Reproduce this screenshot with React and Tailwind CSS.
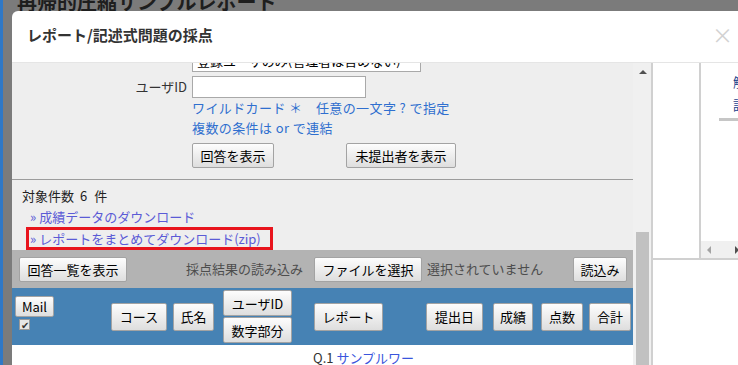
import React from "react";

const btn = "flex items-center justify-center bg-linear-to-b from-[#fdfdfd] to-[#dedede] border border-[#a3a3a3] rounded-[2px] text-[13px] text-black leading-none";

const Btn = ({ w, h = "h-[25px]", className = "", children }) => (
    <div className={`${btn} ${w} ${h} ${className}`}>{children}</div>
);

const App = () => {
    return (
        <div className="w-[738px] h-[365px] relative overflow-hidden bg-[#7b7b7b] font-['Noto_Sans_CJK_JP',sans-serif] text-[#333]">
            {/* page behind the dialog */}
            <div className="flex h-full">
                <div className="w-[3px] h-full bg-[#2f78c6]"></div>
                <div className="ml-[14px] mt-[-10px] text-[20px] font-bold leading-[24px] text-[#1e1e1e]">再帰的圧縮サンプルレポート</div>
            </div>

            {/* dialog */}
            <div className="absolute left-[12px] top-[11px] w-[740px] h-[360px] bg-white rounded-tl-[6px] flex flex-col overflow-hidden">
                <div className="h-[52px] shrink-0 border-b border-[#e5e5e5] flex items-center justify-between pl-[15px] pr-[19px]">
                    <span className="text-[15px] font-bold text-[#333] mt-[-2px]">レポート/記述式問題の採点</span>
                    <span className="text-[21px] leading-none text-[#d2d2d2] mt-[-4px]">×</span>
                </div>

                <div className="flex flex-1 overflow-hidden">
                    {/* left pane */}
                    <div className="w-[621px] shrink-0 bg-[#eeeeee] flex flex-col">
                        <div className="ml-[180px] mt-[-13px] w-[229px] h-[22px] bg-white border border-[#a9a9a9] text-[13px] leading-[20px] pl-[4px] text-black whitespace-nowrap overflow-hidden">登録ユーザのみ(管理者は含めない)</div>

                        <div className="flex items-center mt-[4px]">
                            <span className="w-[180px] pr-[5px] text-right text-[13px]">ユーザID</span>
                            <div className="w-[174px] h-[22px] bg-white border border-[#a9a9a9]"></div>
                        </div>

                        <div className="pl-[180px] text-[13px] leading-[20px] text-[#2f6fcf]">
                            <div className="tracking-[0.4px]">ワイルドカード ＊　任意の一文字 ? で指定</div>
                            <div className="tracking-[0.4px]">複数の条件は or で連結</div>
                        </div>

                        <div className="pl-[180px] mt-[5px] flex">
                            <Btn w="w-[82px]">回答を表示</Btn>
                            <Btn w="w-[110px]" className="ml-[72px]">未提出者を表示</Btn>
                        </div>

                        <div className="mt-[11px] h-px bg-[#9c9c9c]"></div>

                        <div className="mt-[6px] pl-[10px] text-[13px] leading-[20px] text-[#222] flex">
                            <span>対象件数</span>
                            <span className="ml-[6px]">6</span>
                            <span className="ml-[7px]">件</span>
                        </div>
                        <div className="pl-[18px] text-[13px] leading-[21px] text-[#5b5bd6]">» 成績データのダウンロード</div>
                        <div className="ml-[14px] w-[247px] h-[23px] border-[3px] border-[#e8141c] flex items-center pl-[1px] text-[13px] text-[#5b5bd6] whitespace-nowrap">» レポートをまとめてダウンロード(zip)</div>

                        <div className="h-[38px] shrink-0 bg-[#b3b3b3] flex items-center text-[13px]">
                            <Btn w="w-[108px]" className="ml-[7px]">回答一覧を表示</Btn>
                            <span className="ml-[59px] w-[128px] text-[#4d4d4d]">採点結果の読み込み</span>
                            <Btn w="w-[108px]">ファイルを選択</Btn>
                            <span className="ml-[5px] w-[146px] text-[#4d4d4d]">選択されていません</span>
                            <Btn w="w-[54px]">読込み</Btn>
                        </div>

                        <div className="h-[57px] shrink-0 bg-[#4682b4] flex items-center">
                            <div className="ml-[3px] self-start pt-[8px] flex flex-col">
                                <Btn w="w-[39px]" h="h-[21px]" className="border-[#8f8f8f]">Mail</Btn>
                                <div className="ml-[4px] mt-[2px] w-[11px] h-[11px] bg-[#e6e6e6] border border-[#9a9a9a] flex items-center justify-center text-[10px] leading-none text-[#333]">✔</div>
                            </div>
                            <Btn w="w-[56px]" h="h-[28px]" className="ml-[57px] border-[#8f8f8f]">コース</Btn>
                            <Btn w="w-[41px]" h="h-[28px]" className="ml-[6px] border-[#8f8f8f]">氏名</Btn>
                            <div className="ml-[9px] flex flex-col">
                                <Btn w="w-[69px]" h="h-[26px]" className="border-[#8f8f8f]">ユーザID</Btn>
                                <Btn w="w-[69px]" h="h-[26px]" className="border-[#8f8f8f] mt-[1px]">数字部分</Btn>
                            </div>
                            <Btn w="w-[69px]" h="h-[28px]" className="ml-[22px] border-[#8f8f8f]">レポート</Btn>
                            <Btn w="w-[57px]" h="h-[28px]" className="ml-[43px] border-[#8f8f8f]">提出日</Btn>
                            <Btn w="w-[40px]" h="h-[28px]" className="ml-[10px] border-[#8f8f8f]">成績</Btn>
                            <Btn w="w-[42px]" h="h-[28px]" className="ml-[8px] border-[#8f8f8f]">点数</Btn>
                            <Btn w="w-[42px]" h="h-[28px]" className="ml-[6px] border-[#8f8f8f]">合計</Btn>
                        </div>

                        <div className="flex-1 bg-white pl-[301px] pt-[3px] text-[13px] leading-[20px] whitespace-nowrap">
                            <span className="text-[#333]">Q.1 </span>
                            <span className="text-[#3a55dd]">サンプルワー</span>
                        </div>
                    </div>

                    {/* vertical scrollbar */}
                    <div className="w-[18px] shrink-0 bg-[#f0f0f0] flex flex-col">
                        <div className="h-[17px] flex items-center justify-center pl-[1px]">
                            <div className="w-0 h-0 border-l-[4px] border-r-[4px] border-b-[4px] border-l-transparent border-r-transparent border-b-[#505050]"></div>
                        </div>
                        <div className="mt-[152px] ml-[3px] w-[13px] flex-1 bg-[#c1c1c1]"></div>
                    </div>
                    <div className="w-[2px] shrink-0 bg-[#d0d0d0]"></div>

                    {/* right panes */}
                    <div className="flex-1 flex flex-col">
                        <div className="h-[195px] flex">
                            <div className="w-[46px] bg-white"></div>
                            <div className="w-[2px] bg-[#d0d0d0]"></div>
                            <div className="flex-1 flex flex-col bg-white overflow-hidden">
                                <div className="pl-[32px] pt-[7px] text-[13px] leading-[23px] text-[#1c3f8c] whitespace-nowrap">
                                    <div>解答</div>
                                    <div>評価</div>
                                </div>
                                <div className="ml-[18px] mt-[2px] h-[3px] bg-[#c6c6c6]"></div>
                                <div className="flex-1"></div>
                                <div className="h-[17px] bg-[#f0f0f0] flex items-center pl-[6px]">
                                    <div className="w-0 h-0 border-t-[4px] border-b-[4px] border-r-[4px] border-t-transparent border-b-transparent border-r-[#a3a3a3]"></div>
                                    <div className="ml-[24px] w-0 h-0 border-t-[4px] border-b-[4px] border-l-[4px] border-t-transparent border-b-transparent border-l-[#505050]"></div>
                                </div>
                            </div>
                        </div>
                        <div className="h-[2px] bg-[#d0d0d0]"></div>
                        <div className="flex-1 bg-white"></div>
                    </div>
                </div>
            </div>
        </div>
    );
};

export default App;
